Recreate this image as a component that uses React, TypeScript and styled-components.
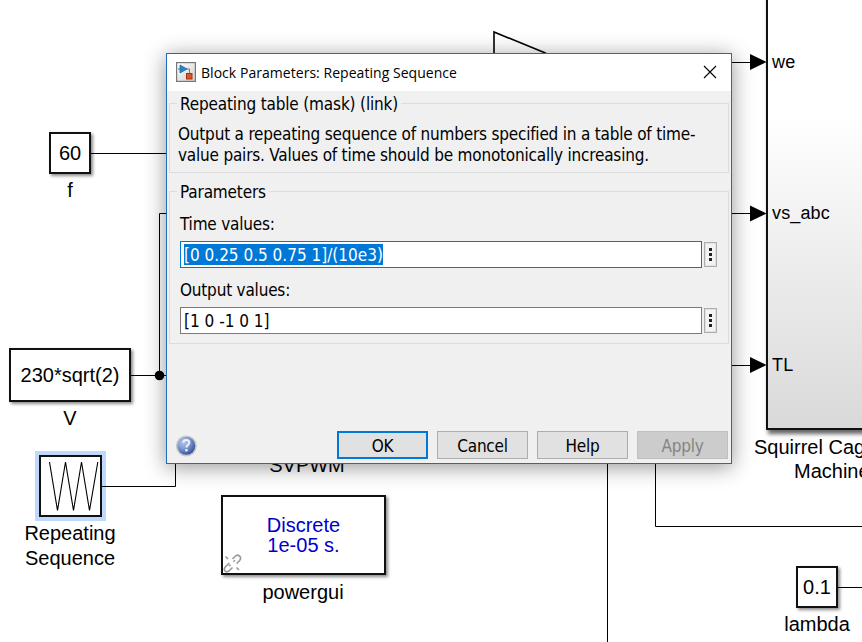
import React from "react";
import styled, { createGlobalStyle } from "styled-components";

const GlobalStyle = createGlobalStyle`
  html, body { margin: 0; padding: 0; overflow: hidden; background: #fff; }
  * { box-sizing: border-box; }
`;

/* ---------- diagram ---------- */

const Canvas = styled.main`
  position: relative;
  width: 862px;
  height: 642px;
  overflow: hidden;
  background: #fff;
  color: #000;
  font-family: "Liberation Sans", Arial, sans-serif;
  font-size: 20px;
`;

const Wires = styled.svg`
  position: absolute;
  inset: 0;
`;

const Block = styled.div<{ $x: number; $y: number; $w: number; $h: number }>`
  position: absolute;
  left: ${(p) => p.$x}px;
  top: ${(p) => p.$y}px;
  width: ${(p) => p.$w}px;
  height: ${(p) => p.$h}px;
  display: flex;
  align-items: center;
  justify-content: center;
  border: 2px solid #111;
  background: #fff;
  box-shadow: 2px 2px 3px rgba(0, 0, 0, 0.45);
  line-height: 20px;
  text-align: center;
  white-space: nowrap;
`;

const SelectedBlock = styled(Block)`
  box-shadow: 0 0 0 4px #bfd9fb;
`;

const PowerBlock = styled(Block)`
  color: #0000cc;
`;

const MachineBlock = styled(Block)`
  background: linear-gradient(#fff 0, #fff 28%, #d9d9d9 100%);
  box-shadow: 2px 4px 4px rgba(0, 0, 0, 0.6);
`;

const Label = styled.div<{ $x: number; $y: number; $lh?: number }>`
  position: absolute;
  left: ${(p) => p.$x}px;
  top: ${(p) => p.$y}px;
  line-height: ${(p) => p.$lh ?? 24}px;
  text-align: center;
  white-space: nowrap;
`;

const PortLabel = styled(Label)`
  font-size: 18px;
  letter-spacing: 0.15px;
`;

const CenteredLabel = styled(Label)`
  transform: translateX(-50%);
`;

const BrokenLink = styled.svg`
  position: absolute;
  left: -1px;
  bottom: -1px;
`;

/* ---------- dialog ---------- */

const Dialog = styled.section`
  position: absolute;
  left: 166px;
  top: 53px;
  width: 566px;
  height: 411px;
  display: flex;
  flex-direction: column;
  border: 1px solid #1a70b8;
  background: #f0f0f0;
  box-shadow: 0 3px 20px rgba(0, 0, 0, 0.42);
  font-family: "DejaVu Sans Condensed", Tahoma, sans-serif;
  font-size: 17px;
  line-height: 20px;
`;

const TitleBar = styled.header`
  display: flex;
  align-items: center;
  height: 37px;
  padding: 0 14px 1px 9px;
  background: #fff;
`;

const Title = styled.h1`
  flex: 1;
  margin: 1px 0 0 5px;
  font: 400 14px/20px "Open Sans", "Segoe UI", sans-serif;
  letter-spacing: 0.04px;
`;

const CloseButton = styled.button`
  display: flex;
  padding: 0;
  border: 0;
  background: none;
`;

const Body = styled.div`
  flex: 1;
  display: flex;
  flex-direction: column;
  padding: 12px 2px 4px;
`;

const Group = styled.section<{ $h: number; $gap: number }>`
  height: ${(p) => p.$h}px;
  margin-bottom: ${(p) => p.$gap}px;
  padding: 0 11px 0 7px;
  border: 1px solid #dcdcdc;
`;

const GroupTitle = styled.h2`
  width: fit-content;
  margin: -10px 0 0;
  padding: 0 3px;
  background: #f0f0f0;
  font-size: 17px;
  font-weight: 400;
  line-height: 20px;
  letter-spacing: -0.16px;
  white-space: nowrap;
`;

const Description = styled.p`
  margin: 10px 0 0 1px;
  line-height: 21px;
  letter-spacing: -0.2px;
  white-space: nowrap;
`;

const FieldLabel = styled.label`
  display: block;
  margin: 12px 0 7px 3px;
  letter-spacing: -0.2px;
`;

const FieldRow = styled.div`
  display: flex;
  align-items: center;
  gap: 2px;
  margin-left: 3px;
`;

const TextField = styled.div<{ $focus?: boolean }>`
  display: flex;
  align-items: center;
  width: 522px;
  height: 27px;
  padding: 0 3px;
  border: 1px solid ${(p) => (p.$focus ? "#0078d7" : "#7a7a7a")};
  background: #fff;
  white-space: nowrap;
`;

const Selection = styled.span`
  height: 21px;
  padding-top: 1px;
  line-height: 20px;
  background: #0078d7;
  color: #fff;
`;

const MoreButton = styled.button`
  display: flex;
  flex-direction: column;
  align-items: center;
  justify-content: center;
  gap: 2px;
  width: 13px;
  height: 25px;
  padding: 0;
  border: 1px solid #adadad;
  background: #f3f3f3;
  box-shadow: inset 0 0 0 1px #e1e1e1;
`;

const Dot = styled.i`
  width: 3px;
  height: 3px;
  background: #222;
`;

const Footer = styled.footer`
  display: flex;
  align-items: flex-end;
  gap: 9px;
  margin-top: auto;
  padding: 0 1px 0 6px;
`;

const HelpIcon = styled.svg`
  margin: 0 auto 2px 0;
`;

const PushButton = styled.button<{ $default?: boolean }>`
  width: 91px;
  height: 28px;
  padding: 1px 0 0;
  border: ${(p) => (p.$default ? "2px solid #0078d7" : "1px solid #adadad")};
  background: #e1e1e1;
  color: #000;
  font: inherit;
  letter-spacing: -0.25px;
  &:disabled {
    border-color: #bfbfbf;
    background: #ccc;
    color: #838383;
  }
`;

function BlockIcon() {
  return (
    <svg width="20" height="20" viewBox="0 0 20 20">
      <defs>
        <linearGradient id="tile" x1="0" y1="0" x2="1" y2="1">
          <stop offset="0" stopColor="#fff" />
          <stop offset="1" stopColor="#cfcfcf" />
        </linearGradient>
      </defs>
      <rect x="0.6" y="0.6" width="18.800" height="18.800" fill="url(#tile)" stroke="#777" strokeWidth="1.2" />
      <path d="M10 7H13.500V11" fill="none" stroke="#777" />
      <path d="M2 7H4" stroke="#2475b0" />
      <path d="M4 3L11 7L4 11Z" fill="#2b86c5" stroke="#17609a" strokeWidth="0.7" />
      <rect x="10.500" y="11.500" width="5.500" height="5.500" fill="#dc5528" stroke="#a43312" />
    </svg>
  );
}

function HelpBadge() {
  return (
    <HelpIcon width="22" height="22" viewBox="0 0 22 22">
      <defs>
        <radialGradient id="ball" cx="0.35" cy="0.3" r="0.75">
          <stop offset="0" stopColor="#b5c8ec" />
          <stop offset="0.5" stopColor="#7c97cf" />
          <stop offset="1" stopColor="#2f4f99" />
        </radialGradient>
      </defs>
      <circle cx="11.300" cy="11" r="10.500" fill="#c9c9c9" />
      <circle cx="11.300" cy="10.800" r="9" fill="url(#ball)" />
      <path d="M8.300 7.500C8.500 5.800 9.800 4.900 11.400 4.900C13.200 4.900 14.300 5.900 14.300 7.400C14.300 9.700 11.500 9.900 11.500 12.500" fill="none" stroke="#eef2fb" strokeWidth="2" />
      <circle cx="11.400" cy="15.300" r="1.300" fill="#eef2fb" />
    </HelpIcon>
  );
}

function More() {
  return (
    <MoreButton aria-label="More">
      <Dot />
      <Dot />
      <Dot />
    </MoreButton>
  );
}

function Diagram() {
  return (
    <>
      <MachineBlock $x={766} $y={-10} $w={200} $h={440} />
      <Block $x={49} $y={132} $w={42} $h={42}>60</Block>
      <Block $x={9} $y={348} $w={122} $h={54}>230*sqrt(2)</Block>
      <SelectedBlock $x={39} $y={455} $w={63} $h={62} />
      <PowerBlock $x={221} $y={495} $w={165} $h={80}>
        <span>Discrete<br />1e-05 s.</span>
        <BrokenLink width="22" height="20" viewBox="0 0 22 20" fill="none" stroke="#999" strokeWidth="1.6">
          <path d="M10.500 5L13.500 2C16.500 -0.400 20.300 3.300 17.600 6.500L14.600 9.500" />
          <path d="M7.300 9L3.500 12.800C0.500 16 4 19.500 7.200 16.700L10.500 13.500" />
          <path d="M3.500 2.500L6 5M14.500 13.500L17 16M7 12.200L8.500 10.700M11.500 7.700L13 6.200" />
        </BrokenLink>
      </PowerBlock>
      <Block $x={796} $y={566} $w={42} $h={42}>0.1</Block>

      <Wires width="862" height="642" viewBox="0 0 862 642" fill="none" stroke="#000">
        <path d="M91 153.500H166M166 213.500H159.500V375.500M131 375.500H166M102 486.500H175.500V464M607.500 464V642M655.500 464V526.500H862M838 587.500H862M732 62.500H752M732 213.500H752M732 365.500H752" />
        <path d="M546 53.300L494 32V54" strokeWidth="1.6" />
        <path d="M49.500 462L57.500 510.500L65.500 462L73.500 510.500L81.500 462L89.500 510.500L97.800 462" strokeWidth="1.1" />
        <circle cx="159.500" cy="375.500" r="4.800" fill="#000" stroke="none" />
        <path d="M750 54L766.500 62L750 70ZM750 205.500L766.500 213.500L750 221.500ZM750 357L766.500 365L750 373Z" fill="#000" stroke="none" />
      </Wires>

      <CenteredLabel $x={70} $y={178}>f</CenteredLabel>
      <CenteredLabel $x={70} $y={406}>V</CenteredLabel>
      <CenteredLabel $x={70} $y={521} $lh={25}>Repeating<br />Sequence</CenteredLabel>
      <CenteredLabel $x={307} $y={453}>SVPWM</CenteredLabel>
      <CenteredLabel $x={303} $y={580}>powergui</CenteredLabel>
      <CenteredLabel $x={817} $y={612}>lambda</CenteredLabel>
      <Label $x={754} $y={435}>Squirrel Cage</Label>
      <Label $x={794} $y={459}>Machine</Label>
      <PortLabel $x={772} $y={50}>we</PortLabel>
      <PortLabel $x={772} $y={201}>vs_abc</PortLabel>
      <PortLabel $x={772} $y={353}>TL</PortLabel>
    </>
  );
}

function ParametersDialog() {
  return (
    <Dialog>
      <TitleBar>
        <BlockIcon />
        <Title>Block Parameters: Repeating Sequence</Title>
        <CloseButton aria-label="Close">
          <svg width="14" height="14" viewBox="0 0 14 14">
            <path d="M1 1L13 13M13 1L1 13" stroke="#000" strokeWidth="1.1" />
          </svg>
        </CloseButton>
      </TitleBar>
      <Body>
        <Group $h={70} $gap={18}>
          <GroupTitle>Repeating table (mask) (link)</GroupTitle>
          <Description>
            Output a repeating sequence of numbers specified in a table of time-
            <br />
            value pairs. Values of time should be monotonically increasing.
          </Description>
        </Group>
        <Group $h={153} $gap={0}>
          <GroupTitle>Parameters</GroupTitle>
          <FieldLabel>Time values:</FieldLabel>
          <FieldRow>
            <TextField $focus>
              <Selection>[0 0.25 0.5 0.75 1]/(10e3)</Selection>
            </TextField>
            <More />
          </FieldRow>
          <FieldLabel>Output values:</FieldLabel>
          <FieldRow>
            <TextField>[1 0 -1 0 1]</TextField>
            <More />
          </FieldRow>
        </Group>
        <Footer>
          <HelpBadge />
          <PushButton $default>OK</PushButton>
          <PushButton>Cancel</PushButton>
          <PushButton>Help</PushButton>
          <PushButton disabled>Apply</PushButton>
        </Footer>
      </Body>
    </Dialog>
  );
}

export default function App() {
  return (
    <Canvas>
      <GlobalStyle />
      <Diagram />
      <ParametersDialog />
    </Canvas>
  );
}
